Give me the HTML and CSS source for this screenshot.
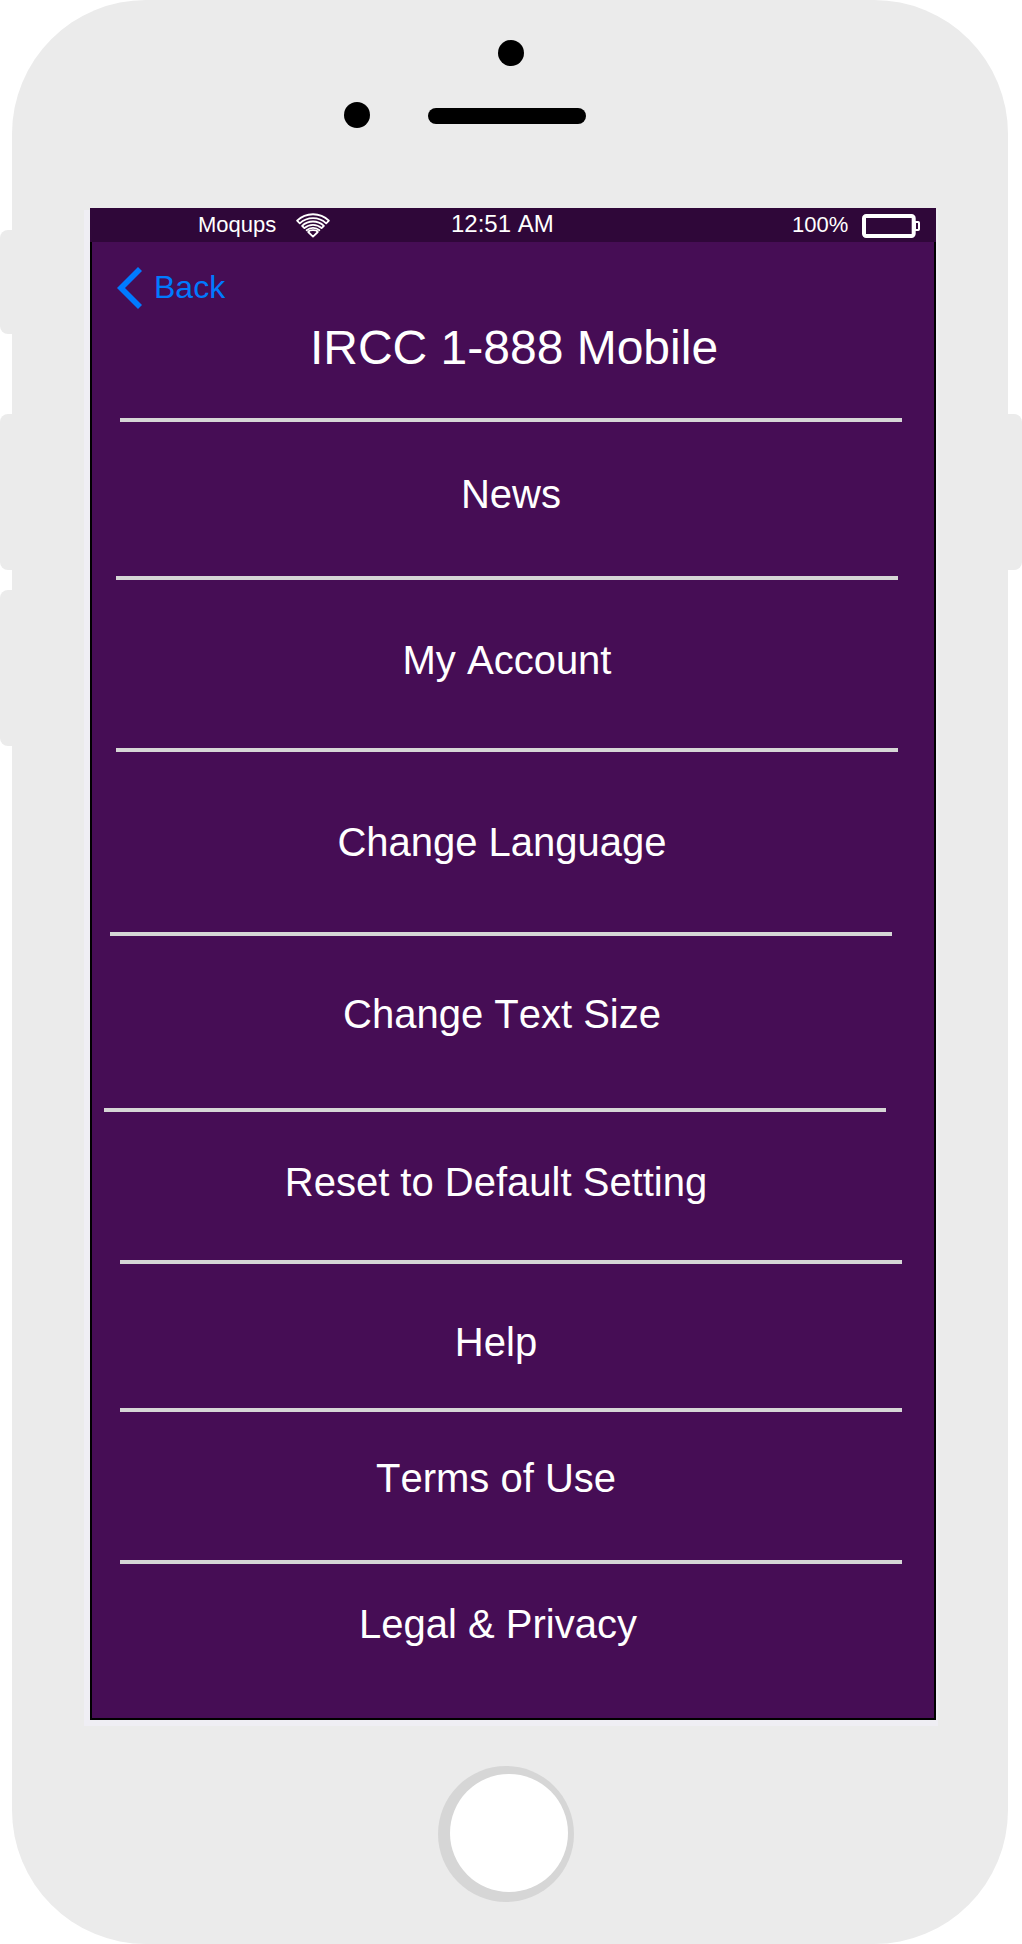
FILE: index.html
```html
<!DOCTYPE html>
<html lang="en">
<head>
<meta charset="utf-8">
<title>IRCC 1-888 Mobile</title>
<link rel="stylesheet" href="styles.css">
</head>
<body>
<div class="phone">
  <span class="key key-mute"></span>
  <span class="key key-up"></span>
  <span class="key key-down"></span>
  <span class="key key-power"></span>

  <div class="earpiece">
    <span class="camera"></span>
    <div class="speaker-row">
      <span class="sensor"></span>
      <span class="speaker"></span>
    </div>
  </div>

  <div class="display">
    <main class="screen">
      <header class="status">
        <span class="carrier">Moqups</span>
        <svg class="wifi" width="36" height="26" viewBox="-18 -25 36 26" fill="none" stroke="#fff" stroke-width="1.8" stroke-linejoin="round" stroke-linecap="round">
          <path d="M-15.9-16.3A22.8 22.8 0 0 1 15.9-16.3L13.2-13.6A19.2 19.2 0 0 0-13.2-13.6Z"/>
          <path d="M-10.9-11.2A16 16 0 0 1 10.9-11.2L8.6-8.9A12.8 12.8 0 0 0-8.6-8.9Z"/>
          <path d="M-6.4-6.8A9.8 9.8 0 0 1 6.4-6.8"/>
          <path d="M-4.8-5C-3.6-7.4 3.6-7.4 4.8-5L0-.4Z"/>
        </svg>
        <span class="time">12:51 AM</span>
        <span class="percent">100%</span>
        <svg class="battery" width="60" height="24" viewBox="0 0 60 24" fill="none" stroke="#fff">
          <rect x="2" y="2.1" width="49.7" height="19.8" rx="2.2" stroke-width="4"/>
          <path d="M53 8h3.2q.8 0 .8.8v6.4q0 .8-.8.8H53z" stroke-width="2"/>
        </svg>
      </header>
      <a class="back">
        <svg width="26" height="42" viewBox="0 0 26 42"><path d="M21 0 25 3.9 8 21 25 38.1 21 42 0 21z" fill="#007aff"/></svg>
        <span>Back</span>
      </a>
      <h1 class="title">IRCC 1-888 Mobile</h1>
      <ul class="menu">
        <li class="news"><span>News</span></li>
        <li class="account"><span>My Account</span></li>
        <li class="language"><span>Change Language</span></li>
        <li class="text-size"><span>Change Text Size</span></li>
        <li class="reset"><span>Reset to Default Setting</span></li>
        <li class="help"><span>Help</span></li>
        <li class="terms"><span>Terms of Use</span></li>
        <li class="legal"><span>Legal &amp; Privacy</span></li>
      </ul>
    </main>
  </div>

  <div class="home"><span class="home-face"></span></div>
</div>
</body>
</html>
```

FILE: styles.css
```css
* { box-sizing: border-box; }

body {
  margin: 0;
  background: #fff;
  font-family: "Liberation Sans", Arial, sans-serif;
  font-kerning: none;
  color: #fff;
}

.phone {
  position: relative;
  width: 996px;
  height: 1944px;
  margin-left: 12px;
  background: #ebebeb;
  border-radius: 134px;
}

/* hardware keys stick out of the case */
.key {
  position: absolute;
  left: -12px;
  width: 12px;
  height: 156px;
  background: #ebebeb;
  border-radius: 8px 0 0 8px;
}
.key-mute { top: 230px; height: 104px; }
.key-up { top: 414px; }
.key-down { top: 590px; }
.key-power { top: 414px; left: 996px; width: 14px; border-radius: 0 8px 8px 0; }

.earpiece { height: 210px; padding-top: 40px; }
.camera, .sensor {
  display: block;
  width: 26px;
  height: 26px;
  border-radius: 50%;
  background: #000;
}
.camera { margin-left: 486px; }
.speaker-row {
  display: flex;
  align-items: center;
  gap: 58px;
  margin: 36px 0 0 332px;
}
.speaker {
  width: 158px;
  height: 16px;
  margin-top: 2px;
  border-radius: 8px;
  background: #000;
}

.display {
  width: 854px;
  height: 1516px;
  margin-left: 72px;
  padding-left: 6px;
  background: #efeef4;
}
.screen {
  width: 846px;
  height: 1512px;
  margin-top: -2px;
  border: solid #000;
  border-width: 0 2px 2px;
  background: #460d55;
  float: left;
}

.status {
  display: flex;
  align-items: center;
  height: 34px;
  margin: 0 -2px;
  padding-left: 108px;
  background: #2f0739;
  font-size: 22px;
  line-height: 26px;
  white-space: nowrap;
}
.carrier { width: 97px; }
.wifi { flex: none; }
.time { width: 341px; margin: 0 0 2px 120px; font-size: 24px; }
.percent { width: 70px; }
.battery { flex: none; margin-top: 2px; }

.back {
  display: flex;
  align-items: center;
  gap: 11px;
  height: 42px;
  margin: 25px 0 0 25px;
  color: #007aff;
  font-size: 32px;
  line-height: 36px;
}
.back span { margin-bottom: 2px; }
.title {
  width: 844px;
  margin: 11px 0 0;
  font-size: 48px;
  font-weight: 400;
  line-height: 56px;
  text-align: center;
}

.menu { margin: 42px 0 0; padding: 0; list-style: none; }
.menu li {
  width: 782px;
  margin-left: 28px;
  border-top: 4px solid #d6d6d6;
  font-size: 40px;
  line-height: 46px;
}
.menu span { display: block; text-align: center; }
.menu .news { height: 158px; margin-left: 28px; padding-top: 49px; }
.menu .account { height: 172px; margin-left: 24px; padding-top: 57px; }
.menu .language { height: 184px; margin-left: 24px; padding-top: 67px; }
.menu .text-size { height: 176px; margin-left: 18px; padding-top: 55px; }
.menu .reset { height: 152px; margin-left: 12px; padding-top: 47px; }
.menu .help { height: 148px; padding-top: 55px; }
.menu .terms { height: 152px; padding-top: 43px; }
.menu .legal { height: 158px; padding-top: 37px; }
.language span { margin-left: -10px; }
.text-size span, .reset span { margin-left: 2px; }
.help span, .terms span { margin-left: -30px; }
.legal span { margin-left: -26px; }

.home {
  width: 136px;
  height: 136px;
  margin: 40px 0 0 426px;
  padding: 8px 0 0 12px;
  border-radius: 50%;
  background: #d6d6d6;
}
.home-face {
  display: block;
  width: 118px;
  height: 118px;
  border-radius: 50%;
  background: #fff;
}
```
